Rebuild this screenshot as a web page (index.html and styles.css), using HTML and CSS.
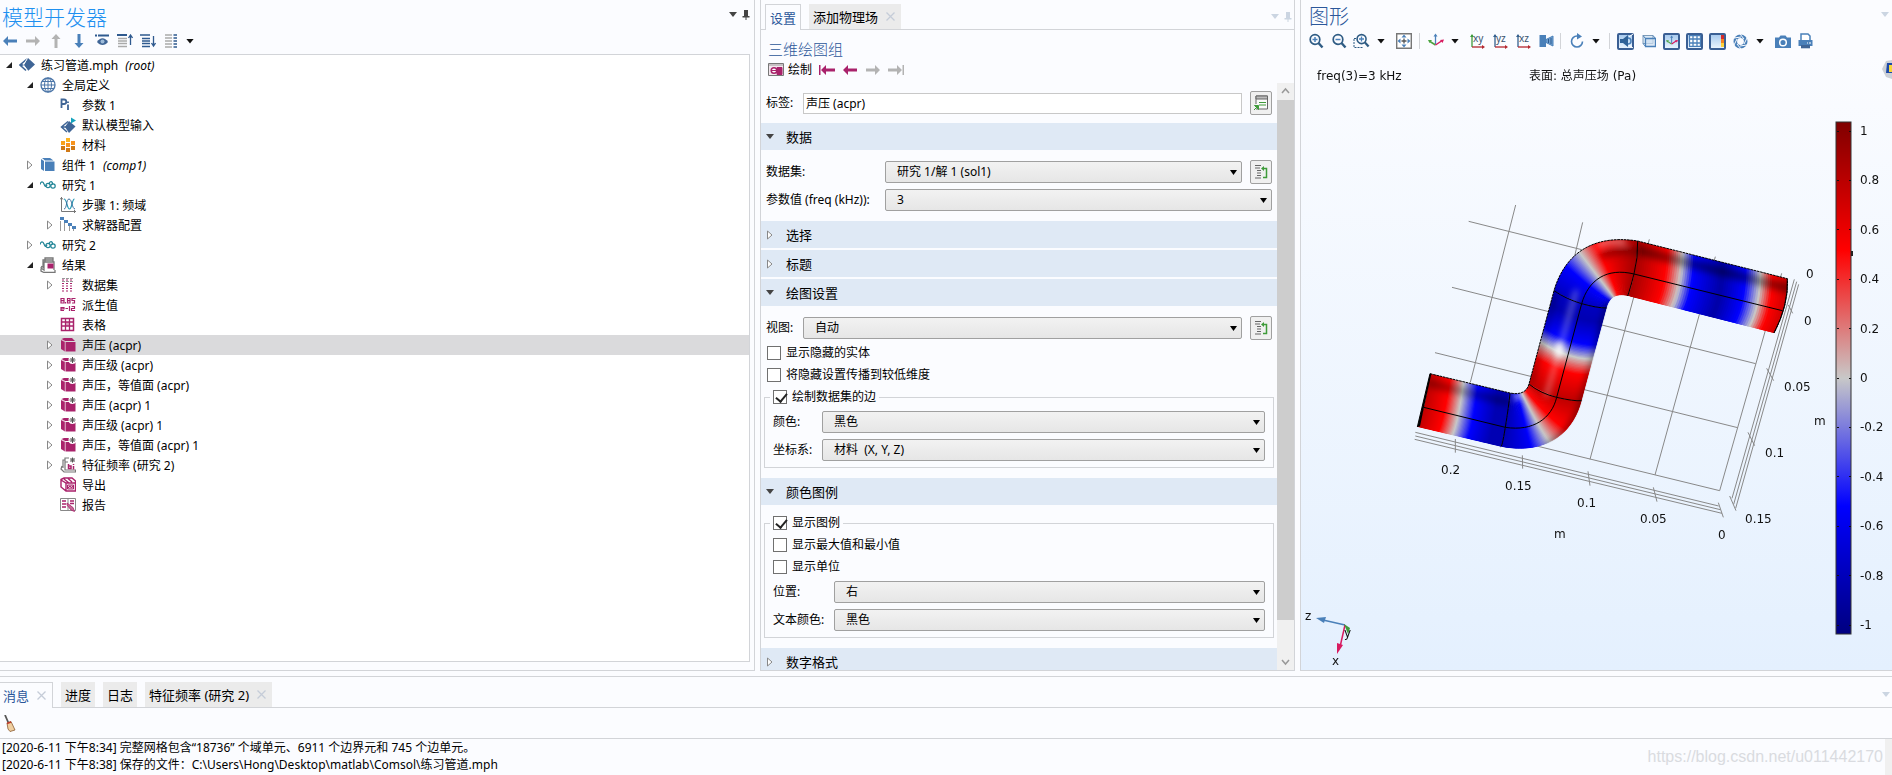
FILE: index.html
```html
<!DOCTYPE html>
<html lang="zh-CN">
<head>
<meta charset="utf-8">
<title>练习管道.mph</title>
<link rel="stylesheet" href="styles.css">
</head>
<body>
<svg class="defs" width="0" height="0" aria-hidden="true">
  <symbol id="open" viewBox="0 0 8 8"><path d="M7 1v6H1z" fill="#222"/></symbol>
  <symbol id="closed" viewBox="0 0 8 10"><path d="M1.500 1v8L6 5z" fill="#fff" stroke="#888"/></symbol>
  <symbol id="left" viewBox="0 0 14 10"><path d="M0 5l5-5v3.500h9v3H5V10z" fill="currentColor"/></symbol>
  <symbol id="right" viewBox="0 0 14 10"><path d="M14 5L9 0v3.500H0v3h9V10z" fill="currentColor"/></symbol>
  <symbol id="pin" viewBox="0 0 8 12"><path d="M2 1h4v6h1.500v1.500h-3V11h-1V8.500H.500V7H2z" fill="currentColor"/></symbol>
  <symbol id="cross" viewBox="0 0 9 9"><path d="M.500.500l8 8M8.500.500l-8 8" stroke="#c5ccd8" stroke-width="1.300"/></symbol>
  <symbol id="root" viewBox="0 0 16 16"><path d="M9 1l7 6.500L9 14 4.500 8z" fill="#3f6596"/><path d="M8 2L1 8l6 5.500M2 8h5" fill="none" stroke="#3f6596" stroke-width="1.600"/><path d="M8 2L4.500 8 9 14" fill="none" stroke="#fff"/></symbol>
  <symbol id="globe" viewBox="0 0 16 16"><g fill="none" stroke="#4c76a8"><circle cx="8" cy="8" r="7" stroke-width="1.300"/><ellipse cx="8" cy="8" rx="3.500" ry="7"/><path d="M8 1v14M1 8h14M2 4.500h12M2 11.500h12"/></g></symbol>
  <symbol id="pi" viewBox="0 0 16 16"><path d="M1.500 11V2.500h2.500a2 2 0 0 1 0 4.500H2M8 7.500V13M8 4.500V6" fill="none" stroke="#3f6596" stroke-width="1.800"/></symbol>
  <symbol id="input" viewBox="0 0 16 16"><path d="M9 4l6.500 5.500L9 16 5 10z" fill="#3f6596"/><path d="M8 4.500L1.500 10 7 15M2 10h5" fill="none" stroke="#3f6596" stroke-width="1.500"/><path d="M11 .500l5 3-5 3z" fill="#14a3bd"/></symbol>
  <symbol id="material" viewBox="0 0 16 16"><path d="M6 1h4v4H6z" fill="#fbb321"/><path d="M1 4h4v4H1z" fill="#f8a11c"/><path d="M6 6h4v4H6zM11 4h4v4h-4z" fill="#f7931e"/><path d="M1 9h4v4H1zM6 11h4v4H6zM11 9h4v4h-4z" fill="#d07a17"/></symbol>
  <symbol id="component" viewBox="0 0 16 16"><path d="M1 2l3 2v10l-3-2zM5 4.500h9.500V14H5zM2 1h8l3.500 2.500H5z" fill="#4a80b9"/></symbol>
  <symbol id="study" viewBox="0 0 16 16"><g fill="none" stroke="#1f8496" stroke-width="1.200"><path d="M0 7.500C1 4 3 4 4 7s2 3 3 1"/><circle cx="8" cy="8.500" r="2.200"/><circle cx="13" cy="9" r="2.200"/><path d="M9.500 7a1.600 1.600 0 1 1 2.500.500"/></g></symbol>
  <symbol id="freq" viewBox="0 0 16 16"><path d="M1.500 0v14.500H16M0 2.500L1.500.500 3 2.500M14 13l1.500 1.500L14 16" fill="none" stroke="#777"/><path d="M4 2c3 0 3 10 5.500 10S12 2 14.500 2" fill="none" stroke="#2697b3" stroke-width="1.200"/><path d="M4 12C7 12 6 2 9 2s3 10 6 10" fill="none" stroke="#3e6e9e"/></symbol>
  <symbol id="solver" viewBox="0 0 16 16"><path d="M.500 4v10M4.500 6v8M9.500 9v5M13.500 11v3" stroke="#999"/><path d="M0 0h4v3H0zM4 3h4v3H4zM8 6h4v3H8zM12 9h4v3h-4z" fill="#4a80b9"/></symbol>
  <symbol id="results" viewBox="0 0 16 16"><path d="M5 5V1h8v2M3 11V3h10v2M2 9L1 11l3 2V5h10v8M1 12v2l3 1.500h11V13" fill="none" stroke="#777" stroke-width="1.300"/><path d="M7.500 6.500h6v5h-6z" fill="#a9226b"/></symbol>
  <symbol id="dataset" viewBox="0 0 16 16"><path d="M2 1.500h12M2 4.500h12" stroke="#999" stroke-dasharray="3 1"/><path d="M2 3h12M2 6.500h12M2 9h12M2 11.500h12M2 14h12" stroke="#a9226b" stroke-dasharray="2 2"/></symbol>
  <symbol id="derived" viewBox="0 0 16 16"><path d="M1 1.500h3v2.200H1zM1 3.700h3V6H1zM5.500 5v1.500M7.500 1.500H10v2.200H7.500zM7.500 3.700H10V6H7.500zM15.500 1.500H12v2h2.500V6H12M1 10.500h3v1.300H1zM1 10v3.500h3M5.500 11.500H8M9.500 9v5M11.500 9.500h3v2h-3v2h3.500" fill="none" stroke="#a9226b" stroke-width="1.200"/></symbol>
  <symbol id="table" viewBox="0 0 16 16"><path d="M1.500 1.500h12v12h-12z" fill="#fff" stroke="#a9226b" stroke-width="1.500"/><path d="M5 5h4v4H5z" fill="#dca6c2"/><path d="M1 5h13M1 9h13M5.500 2v11M9.500 2v11" stroke="#a9226b" stroke-width="1.300"/></symbol>
  <symbol id="cube" viewBox="0 0 16 16"><path d="M1 3l4 2v9.500l-4-2.500zM5.500 5H15.500v9.500H5.500zM1.500 2L4 1h8l3 3H5z" fill="#a9226b"/><path d="M1.500 2.600L5 4.500V14" fill="none" stroke="#d893b5" stroke-width=".700"/></symbol>
  <symbol id="cubenew" viewBox="0 0 16 16"><use href="#cube"/><circle cx="12.500" cy="3" r="4" fill="#fff"/><path d="M12.500 0v6M9.500 3h6M10.500 1l4 4M14.500 1l-4 4" stroke="#555"/></symbol>
  <symbol id="eigen" viewBox="0 0 16 16"><path d="M5 9V1h4M3 11V3h2M2 9l-1 3 3 3h11.500v-2H5V5h3" fill="none" stroke="#777" stroke-width="1.200"/><path d="M8.500 7v4.500h2.500V9H9M13.500 9v3.500M13.500 7v1" fill="none" stroke="#a9226b" stroke-width="1.500"/><path d="M12.500.500v5M10 3h5M10.500 1l4 4M14.500 1l-4 4" stroke="#555"/></symbol>
  <symbol id="export" viewBox="0 0 16 16"><path d="M1 2.500L4 1h8l3.500 3v10H6L1 10zM1 3l5 3h9.500M6 6v8M4 2l5 4M8 1.500L12 5" fill="none" stroke="#a9226b" stroke-width="1.400"/><path d="M7.500 8h6v4h-6z" fill="#e6bcd1" stroke="#a9226b"/><path d="M8 11l2-2 1.500 2L13 9" fill="none" stroke="#a9226b"/></symbol>
  <symbol id="report" viewBox="0 0 16 16"><path d="M.500 1.500h15v12H.500zM8 2v11" fill="#fff" stroke="#888"/><path d="M2 4h4M2 7h4M2 10h4M10 4h4M10 6.500h4" stroke="#a9226b" stroke-width="1.300"/><path d="M7 6l6 4.500 1.500 4-3.500-1.500L7 8z" fill="#c76a97" stroke="#a9226b" stroke-width=".800"/></symbol>
  <symbol id="zoom" viewBox="0 0 16 16"><circle cx="7" cy="6.500" r="4.800" fill="none" stroke="#2f5c84" stroke-width="1.700"/><path d="M10.500 10l4 4.500" stroke="#2f5c84" stroke-width="2.400"/></symbol>
  <symbol id="triad" viewBox="0 0 18 16"><path d="M8.500 11V2" stroke="#4a80b9" stroke-width="1.300"/><path d="M8.500 12L3 8.500" stroke="#4ba43f" stroke-width="1.500"/><path d="M8.500 12l6-4" stroke="#d81b60" stroke-width="1.500"/><path d="M6.500 3.500L8.500.500l2 3z" fill="#4a80b9"/><path d="M1 7l4 0-2.500 3z" fill="#4ba43f"/><path d="M17 6.500l-4 .500 2.500 3z" fill="#d81b60"/></symbol>
  <symbol id="axes" viewBox="0 0 16 16"><path d="M2 14V2" stroke="currentColor" stroke-width="1.300"/><path d="M0 4l2-3 2 3z" fill="currentColor"/><path d="M2 14h11" stroke="#b3262e" stroke-width="1.300"/><path d="M12 12l3 2-3 2z" fill="#b3262e"/></symbol>
  <symbol id="sync" viewBox="0 0 16 16"><path d="M2 1.500h6M2 4h5M4 6.500h4M4 9h4M4 11.500h4M2 14h6" stroke="#666"/><path d="M10 4.500h3.500v9H10" fill="none" stroke="#3f9b3a" stroke-width="1.500"/><path d="M11 2v5L8 4.500z" fill="#3f9b3a"/></symbol>
</svg>

<main class="workspace">
  <section class="panel builder">
    <header class="head">
      <h1 class="title bright">模型开发器</h1>
      <span class="corner dark"><i class="caret"></i><svg width="8" height="12"><use href="#pin"/></svg></span>
    </header>
    <div class="toolbar tb-left">
      <button class="tool blue" aria-label="后退"><svg width="14" height="10"><use href="#left"/></svg></button>
      <button class="tool grey" aria-label="前进"><svg width="14" height="10"><use href="#right"/></svg></button>
      <button class="tool grey" aria-label="上移"><svg width="10" height="14" viewBox="0 0 10 14"><path d="M5 0l4.500 5h-3v9h-3V5h-3z" fill="currentColor"/></svg></button>
      <button class="tool blue" aria-label="下移"><svg width="10" height="14" viewBox="0 0 10 14"><path d="M5 14L.500 9h3V0h3v9h3z" fill="currentColor"/></svg></button>
      <button class="tool" aria-label="显示"><svg width="14" height="14" viewBox="0 0 14 14"><path d="M0 1.500h2M3 1.500h11" stroke="#2f5a8f" stroke-width="2"/><path d="M2 8c3-5 8-5 11 0-3 4-8 4-11 0z" fill="#3f6596"/><circle cx="7.500" cy="7.500" r="2" fill="#9dbbd9"/></svg></button>
      <button class="tool" aria-label="折叠"><svg width="16" height="14" viewBox="0 0 16 14"><path d="M0 1h10" stroke="#2f5a8f" stroke-width="2"/><path d="M1 4.500h9M1 7h9M1 9.500h9M1 12.500h9" stroke="#aaa" stroke-width="1.500"/><path d="M13.500 11V1M11.500 4l2-3 2 3" fill="none" stroke="#2f5a8f" stroke-width="1.300"/></svg></button>
      <button class="tool" aria-label="展开"><svg width="16" height="14" viewBox="0 0 16 14"><path d="M0 1h10M2 4.500h8M2 7h8M2 9.500h8M2 12.500h8" stroke="#2f5a8f" stroke-width="1.500"/><path d="M13.500 2v10M11.500 9l2 3 2-3" fill="none" stroke="#2f5a8f" stroke-width="1.300"/></svg></button>
      <button class="tool" aria-label="节点文本"><svg width="12" height="14" viewBox="0 0 12 14"><path d="M0 1h7M0 4h7M0 7h7M0 10h7M0 13h7" stroke="#aaa" stroke-width="1.700"/><path d="M8.500 1H12M8.500 4H12M8.500 7H12M8.500 10H12M8.500 13H12" stroke="#2f5a8f" stroke-width="1.700"/></svg></button>
      <button class="drop" aria-label="更多"><i class="caret"></i></button>
    </div>
    <div class="tree" role="tree">
      <div class="row l0" role="treeitem"><svg class="tw"><use href="#open"/></svg><svg class="ic"><use href="#root"/></svg><span>练习管道.mph <em>(root)</em></span></div>
      <div class="row l1" role="treeitem"><svg class="tw"><use href="#open"/></svg><svg class="ic"><use href="#globe"/></svg><span>全局定义</span></div>
      <div class="row l2" role="treeitem"><i class="tw"></i><svg class="ic"><use href="#pi"/></svg><span>参数 1</span></div>
      <div class="row l2" role="treeitem"><i class="tw"></i><svg class="ic"><use href="#input"/></svg><span>默认模型输入</span></div>
      <div class="row l2" role="treeitem"><i class="tw"></i><svg class="ic"><use href="#material"/></svg><span>材料</span></div>
      <div class="row l1" role="treeitem"><svg class="tw"><use href="#closed"/></svg><svg class="ic"><use href="#component"/></svg><span>组件 1 <em>(comp1)</em></span></div>
      <div class="row l1" role="treeitem"><svg class="tw"><use href="#open"/></svg><svg class="ic"><use href="#study"/></svg><span>研究 1</span></div>
      <div class="row l2" role="treeitem"><i class="tw"></i><svg class="ic"><use href="#freq"/></svg><span>步骤 1: 频域</span></div>
      <div class="row l2" role="treeitem"><svg class="tw"><use href="#closed"/></svg><svg class="ic"><use href="#solver"/></svg><span>求解器配置</span></div>
      <div class="row l1" role="treeitem"><svg class="tw"><use href="#closed"/></svg><svg class="ic"><use href="#study"/></svg><span>研究 2</span></div>
      <div class="row l1" role="treeitem"><svg class="tw"><use href="#open"/></svg><svg class="ic"><use href="#results"/></svg><span>结果</span></div>
      <div class="row l2" role="treeitem"><svg class="tw"><use href="#closed"/></svg><svg class="ic"><use href="#dataset"/></svg><span>数据集</span></div>
      <div class="row l2" role="treeitem"><i class="tw"></i><svg class="ic"><use href="#derived"/></svg><span>派生值</span></div>
      <div class="row l2" role="treeitem"><i class="tw"></i><svg class="ic"><use href="#table"/></svg><span>表格</span></div>
      <div class="row l2 selected" role="treeitem" aria-selected="true"><svg class="tw"><use href="#closed"/></svg><svg class="ic"><use href="#cube"/></svg><span>声压 (acpr)</span></div>
      <div class="row l2" role="treeitem"><svg class="tw"><use href="#closed"/></svg><svg class="ic"><use href="#cubenew"/></svg><span>声压级 (acpr)</span></div>
      <div class="row l2" role="treeitem"><svg class="tw"><use href="#closed"/></svg><svg class="ic"><use href="#cubenew"/></svg><span>声压，等值面 (acpr)</span></div>
      <div class="row l2" role="treeitem"><svg class="tw"><use href="#closed"/></svg><svg class="ic"><use href="#cubenew"/></svg><span>声压 (acpr) 1</span></div>
      <div class="row l2" role="treeitem"><svg class="tw"><use href="#closed"/></svg><svg class="ic"><use href="#cubenew"/></svg><span>声压级 (acpr) 1</span></div>
      <div class="row l2" role="treeitem"><svg class="tw"><use href="#closed"/></svg><svg class="ic"><use href="#cubenew"/></svg><span>声压，等值面 (acpr) 1</span></div>
      <div class="row l2" role="treeitem"><svg class="tw"><use href="#closed"/></svg><svg class="ic"><use href="#eigen"/></svg><span>特征频率 (研究 2)</span></div>
      <div class="row l2" role="treeitem"><i class="tw"></i><svg class="ic"><use href="#export"/></svg><span>导出</span></div>
      <div class="row l2" role="treeitem"><i class="tw"></i><svg class="ic"><use href="#report"/></svg><span>报告</span></div>
    </div>
  </section>

  <section class="panel settings">
    <nav class="tabs">
      <button class="tab active">设置</button>
      <button class="tab">添加物理场<svg class="x"><use href="#cross"/></svg></button>
      <span class="corner pale"><i class="caret"></i><svg width="8" height="12"><use href="#pin"/></svg></span>
    </nav>
    <h2 class="subtitle">三维绘图组</h2>
    <div class="toolbar tb-set">
      <button class="plot"><svg width="16" height="13" viewBox="0 0 16 13"><path d="M.500.500h15v12H.500z" fill="#f3e7ee" stroke="#777"/><path d="M1 2h14" stroke="#999"/><circle cx="6" cy="7.500" r="2.800" fill="#fff" stroke="#a9226b" stroke-width="1.500"/><path d="M4 7.500h4M9 4.500h5v7H9z" fill="#a9226b" stroke="#a9226b"/></svg>绘制</button>
      <button class="tool wine" aria-label="第一个"><svg width="16" height="10" viewBox="0 0 16 10"><path d="M0 0h1.500v10H0zM2 5l5-5v3.500h9v3H7V10z" fill="currentColor"/></svg></button>
      <button class="tool wine" aria-label="上一个"><svg width="14" height="10"><use href="#left"/></svg></button>
      <button class="tool grey" aria-label="下一个"><svg width="14" height="10"><use href="#right"/></svg></button>
      <button class="tool grey" aria-label="最后一个"><svg width="16" height="10" viewBox="0 0 16 10"><path d="M16 0h-1.500v10H16zM14 5L9 0v3.500H0v3h9V10z" fill="currentColor"/></svg></button>
    </div>
    <div class="scroller">
      <form class="form">
        <div class="field first">
          <label for="name">标签:</label>
          <input class="text" id="name" type="text" value="声压 (acpr)">
          <button class="side" type="button" aria-label="转到"><svg width="16" height="16" viewBox="0 0 16 16"><path d="M3 14h11.500V1H3v8" fill="#fafafa" stroke="#666"/><path d="M3 1h11.500v3H3z" fill="#bbb" stroke="#666"/><path d="M6 7.500h7M6 10h7" stroke="#3f9b3a"/><path d="M1.500 10.500h4v4zM1 15l3-3" fill="#3f9b3a" stroke="#3f9b3a"/></svg></button>
        </div>
        <button class="section" type="button"><i class="caret"></i>数据</button>
        <div class="group wide">
          <div class="field"><label for="ds">数据集:</label><span class="select"><select id="ds"><option>研究 1/解 1 (sol1)</option></select></span><button class="side" type="button" aria-label="转到源"><svg width="16" height="16"><use href="#sync"/></svg></button></div>
          <div class="field"><label for="pv">参数值 (freq (kHz)):</label><span class="select"><select id="pv"><option>3</option></select></span></div>
        </div>
        <button class="section" type="button"><svg class="tw"><use href="#closed"/></svg>选择</button>
        <button class="section" type="button"><svg class="tw"><use href="#closed"/></svg>标题</button>
        <button class="section" type="button"><i class="caret"></i>绘图设置</button>
        <div class="group">
          <div class="field"><label for="vw">视图:</label><span class="select"><select id="vw"><option>自动</option></select></span><button class="side" type="button" aria-label="转到源"><svg width="16" height="16"><use href="#sync"/></svg></button></div>
          <label class="check inset"><input type="checkbox">显示隐藏的实体</label>
          <label class="check inset"><input type="checkbox">将隐藏设置传播到较低维度</label>
          <fieldset class="box edges">
            <legend><label class="check"><input type="checkbox" checked>绘制数据集的边</label></legend>
            <div class="field"><label for="col">颜色:</label><span class="select"><select id="col"><option>黑色</option></select></span></div>
            <div class="field"><label for="crd">坐标系:</label><span class="select"><select id="crd"><option>材料&nbsp; (X, Y, Z)</option></select></span></div>
          </fieldset>
        </div>
        <button class="section" type="button"><i class="caret"></i>颜色图例</button>
        <div class="group tight">
          <fieldset class="box legend">
            <legend><label class="check"><input type="checkbox" checked>显示图例</label></legend>
            <label class="check"><input type="checkbox">显示最大值和最小值</label>
            <label class="check"><input type="checkbox">显示单位</label>
            <div class="field"><label for="pos">位置:</label><span class="select"><select id="pos"><option>右</option></select></span></div>
            <div class="field"><label for="tc">文本颜色:</label><span class="select"><select id="tc"><option>黑色</option></select></span></div>
          </fieldset>
        </div>
        <button class="section" type="button"><svg class="tw"><use href="#closed"/></svg>数字格式</button>
      </form>
      <div class="scrollbar" aria-hidden="true">
        <svg width="17" height="17" viewBox="0 0 17 17"><path d="M5 10l3.500-4 3.500 4" fill="none" stroke="#999" stroke-width="1.500"/></svg>
        <i class="thumb"></i><i class="rest"></i>
        <svg width="17" height="17" viewBox="0 0 17 17"><path d="M5 7l3.500 4L12 7" fill="none" stroke="#999" stroke-width="1.500"/></svg>
      </div>
    </div>
  </section>

  <section class="panel graphics">
    <header class="head">
      <h1 class="title">图形</h1>
      <span class="corner pale"><i class="caret"></i></span>
    </header>
    <div class="toolbar tb-gfx">
      <button class="tool" aria-label="放大"><svg width="16" height="16"><use href="#zoom"/><path d="M4.500 6.500h5M7 4v5" stroke="#4a80b9" stroke-width="1.500"/></svg></button>
      <button class="tool" aria-label="缩小"><svg width="16" height="16"><use href="#zoom"/><path d="M4.500 6.500h5" stroke="#4a80b9" stroke-width="1.500"/></svg></button>
      <button class="tool" aria-label="缩放框"><svg width="17" height="16" viewBox="0 0 17 16"><path d="M1 6v8.500h9M1 5.500h3" fill="none" stroke="#2f5c84" stroke-dasharray="2 1"/><svg x="2" y="0" width="15" height="15"><use href="#zoom"/></svg><path d="M6 6h5M8.500 3.500v5" stroke="#4a80b9" stroke-width="1.300"/></svg></button>
      <button class="drop" aria-label="缩放选项"><i class="caret"></i></button>
      <button class="tool" aria-label="缩放到窗口大小"><svg width="16" height="16" viewBox="0 0 16 16"><path d="M.700.700h14.600v14.600H.700z" fill="#fff" stroke="#777" stroke-width="1.400"/><path d="M8 1.500l2.500 3h-5zM8 14.500l2.500-3h-5zM1.500 8l3-2.500v5zM14.500 8l-3-2.500v5z" fill="#4a80b9"/><path d="M5.500 8h5M8 5.500v5" stroke="#555" stroke-width="1.300"/></svg></button>
      <i class="sep"></i>
      <button class="tool" aria-label="默认视图"><svg width="18" height="16"><use href="#triad"/></svg></button>
      <button class="drop" aria-label="视图选项"><i class="caret"></i></button>
      <button class="tool axis green" aria-label="XY 视图"><svg width="16" height="16"><use href="#axes"/></svg><span>xy</span></button>
      <button class="tool axis slate" aria-label="YZ 视图"><svg class="yz" width="16" height="16"><use href="#axes"/></svg><span>yz</span></button>
      <button class="tool axis slate" aria-label="XZ 视图"><svg width="16" height="16"><use href="#axes"/></svg><span>xz</span></button>
      <button class="tool" aria-label="正交投影"><svg width="15" height="14" viewBox="0 0 15 14"><path d="M.500 1H7v12H.500z" fill="#4a80b9"/><path d="M7 5.500l7-3.500v10L7 8.500z" fill="#6fa0d0" stroke="#4a80b9"/><path d="M9.500 5v4M12 4v6" stroke="#2f5a8f"/></svg></button>
      <i class="sep close"></i>
      <button class="tool" aria-label="旋转"><svg width="14" height="16" viewBox="0 0 14 16"><path d="M12.500 8.500A5.500 5.500 0 1 1 7 3h1" fill="none" stroke="#4a80b9" stroke-width="1.600"/><path d="M7 0l5 3.500L7 6.500z" fill="#4a80b9"/></svg></button>
      <button class="drop" aria-label="旋转选项"><i class="caret"></i></button>
      <i class="sep close"></i>
      <button class="tool on" aria-label="场景光"><svg width="14" height="14" viewBox="0 0 14 14"><path d="M1 5h3l5-4v12L4 9H1z" fill="#2f6298"/><path d="M9 4a3 3 0 0 1 0 6" fill="none" stroke="#4a80b9" stroke-width="1.500"/><path d="M10 3l4-3M10 11l4 3" stroke="#fff"/></svg></button>
      <button class="tool" aria-label="透明"><svg width="14" height="14" viewBox="0 0 14 14"><path d="M1 1.500h10v8H1z" fill="#dceaf7" stroke="#7d9bb8"/><path d="M3.500 4.500h10v8h-10z" fill="#cfe0f1" fill-opacity=".7" stroke="#4a80b9" stroke-width="1.300"/><path d="M1 1.500l2.500 3M11 1.500l2.500 3M1 9.500l2.500 3" stroke="#4a80b9"/></svg></button>
      <button class="tool on" aria-label="坐标轴"><svg width="14" height="12" viewBox="0 0 18 16"><use href="#triad"/></svg></button>
      <button class="tool on" aria-label="栅格"><svg width="12" height="12" viewBox="0 0 12 12"><path d="M.500.500h11v11H.500zM4 1v10M8 1v10M1 4h10M1 8h10" fill="#fff" stroke="#4a80b9" stroke-width="1.300"/></svg></button>
      <button class="tool on" aria-label="颜色图例"><svg width="14" height="12" viewBox="0 0 14 12"><path d="M10 0h3v4h-3z" fill="#d42a2a"/><path d="M10 4h3v4h-3z" fill="#f58220"/><path d="M10 8h3v4h-3z" fill="#ffd33a"/></svg></button>
      <button class="tool" aria-label="图像快照"><svg width="15" height="15" viewBox="0 0 15 15"><circle cx="7.500" cy="7.500" r="5.200" fill="none" stroke="#4a80b9" stroke-width="3.600"/><path d="M7 0l4 5M14 4l-3 6M14 11l-7 1M8 15l-4-5M1 11l3-6M1 4l7-1" stroke="#fbfcff" stroke-width="1"/></svg></button>
      <button class="drop" aria-label="快照选项"><i class="caret"></i></button>
      <button class="tool" aria-label="照相"><svg width="16" height="13" viewBox="0 0 16 13"><path d="M0 2.500h4L5.500.500h5L12 2.500h4V13H0z" fill="#4a80b9"/><circle cx="8" cy="7.500" r="3.300" fill="#4a80b9" stroke="#fff" stroke-width="1.500"/></svg></button>
      <button class="tool" aria-label="打印"><svg width="15" height="16" viewBox="0 0 15 16"><path d="M3 7V1h7l2 2v4" fill="#fff" stroke="#4a80b9" stroke-width="1.500"/><path d="M.500 7h14v6H.500z" fill="#4a80b9"/><path d="M3 12h9v3.300H3z" fill="#3f6596"/><path d="M9 10h1M11 10h2" stroke="#fff"/></svg></button>
    </div>
    <svg class="canvas" viewBox="1301 53 591 617" role="img" aria-label="总声压场">
      <defs>
        <linearGradient id="wave" x1="0" y1="0" x2="0" y2="1"><stop offset="0" stop-color="#800000"/><stop offset=".25" stop-color="#f00"/><stop offset=".5" stop-color="#c8c8c8"/><stop offset=".75" stop-color="#00f"/><stop offset="1" stop-color="#000080"/></linearGradient>
        <clipPath id="outline"><path d="M150 581L390 639C420 645 440 637 447 612L522 332C550 235 625 160 773 183L1222 296Q1226 375 1182 459L743 348C710 340 688 352 680 384L605 662C578 770 485 826 362 800L112 741z"/></clipPath>
        <filter id="soft" x="-50%" y="-50%" width="200%" height="200%"><feGaussianBlur stdDeviation="9"/></filter>
      </defs>
      <g transform="translate(1380 180) scale(.33333)">
        <path class="grid" d="M407 75L271 607M608 127L583 232M808 178L630 838M1006 230L825 885M1205 280L1019 932M266 124L605 209M216 322L1127 551M165 518L1073 743M470 798L1019 932"/>
        <path class="grid" d="M106 757L1016 978M106 768L1021 989M104 778L1026 1000M226 777V818M427 826L428 866M624 874L630 917M820 922L831 965M1015 968L1030 1012M1243 298L1056 955M1250 305L1061 973M1256 313L1067 985M1225 375L1238 400M1160 565L1181 602M1104 757L1124 797M1049 948L1068 992"/>
        <g clip-path="url(#outline)">
          <g id="slices"></g>
          <g filter="url(#soft)" fill="none" stroke-linecap="round">
            <path d="M780 212L1225 325" stroke="#000" stroke-width="28" opacity=".4"/>
            <path d="M150 610L380 665" stroke="#000" stroke-width="24" opacity=".3"/>
            <path d="M690 375L612 662Q590 750 510 800" stroke="#000" stroke-width="30" opacity=".35"/>
            <path d="M525 345L455 600" stroke="#000" stroke-width="18" opacity=".25"/>
            <path d="M588 335L500 645" stroke="#fff" stroke-width="12" opacity=".4"/>
            <path d="M538 500V518" stroke="#fff" stroke-width="26"/>
            <path d="M655 195Q690 180 735 186" stroke="#fff" stroke-width="10" opacity=".7"/>
            <path d="M413 647V650" stroke="#fff" stroke-width="16"/>
            <path d="M670 225Q720 208 765 215" stroke="#500" stroke-width="20" opacity=".5"/>
          </g>
        </g>
        <path class="edge" d="M150 581L390 639C420 645 440 637 447 612L522 332C550 235 625 160 773 183L1222 296Q1226 375 1182 459" stroke-dasharray="8 2"/>
        <path class="edge" d="M131 682L376 742C460 755 515 715 530 652L605 371C625 300 680 262 762 282L1207 392M390 640Q386 680 376 742T362 800M447 612Q480 640 530 652T605 662M522 332Q560 358 605 371T680 384M773 183Q774 235 762 282T743 348M1222 296Q1226 375 1182 459M150 581L112 741"/>
        <path d="M150 581L112 741l8-2 12-57 22-100z"/>
      </g>
      <g class="scale">
        <rect x="1836" y="122" width="15" height="512" fill="url(#wave)" stroke="#333"/>
        <path d="M1837 131.500h2m10 0h2M1837 180.500h2m10 0h2M1837 229.500h2m10 0h2M1837 279.500h2m10 0h2M1837 328.500h2m10 0h2M1837 378.500h2m10 0h2M1837 427.500h2m10 0h2M1837 476.500h2m10 0h2M1837 526.500h2m10 0h2M1837 575.500h2m10 0h2M1837 625.500h2m10 0h2" stroke="#111"/>
        <path d="M1852 251v5" stroke="#222" stroke-width="2"/>
      </g>
      <g class="label">
        <text x="1317" y="80">freq(3)=3 kHz</text>
        <text x="1529" y="80">表面: 总声压场 (Pa)</text>
        <text x="1860" y="135">1</text><text x="1860" y="184">0.8</text><text x="1860" y="234">0.6</text><text x="1860" y="283">0.4</text><text x="1860" y="333">0.2</text><text x="1860" y="382">0</text><text x="1860" y="431">-0.2</text><text x="1860" y="481">-0.4</text><text x="1860" y="530">-0.6</text><text x="1860" y="580">-0.8</text><text x="1860" y="629">-1</text>
        <text x="1441" y="474">0.2</text><text x="1505" y="490">0.15</text><text x="1577" y="507">0.1</text><text x="1640" y="523">0.05</text><text x="1718" y="539">0</text><text x="1554" y="538">m</text>
        <text x="1745" y="523">0.15</text><text x="1765" y="457">0.1</text><text x="1784" y="391">0.05</text><text x="1814" y="425">m</text><text x="1804" y="325">0</text><text x="1806" y="278">0</text>
      </g>
      <g class="compass">
        <path d="M1345 625L1323 620" stroke="#4a80b9" stroke-width="1.500"/><path d="M1316 618l10-1-2 6z" fill="#4a80b9"/>
        <path d="M1345 625l-5 22" stroke="#d81b60" stroke-width="1.500"/><path d="M1337 654l0-11 6 2z" fill="#d81b60"/>
        <path d="M1344 624l6 4-2 6z" fill="#3f9b3a"/>
        <g class="label"><text x="1305" y="620">z</text><text x="1344" y="637">y</text><text x="1332" y="665">x</text></g>
      </g>
      <g class="badge"><path d="M1892 60l-6 1-4 8 4 8 6 2z" fill="#ccd0d6"/><path d="M1892 63h-5l-1 10h6z" fill="#1c49a8"/><path d="M1892 65h-3v7h3z" fill="#f5d63c"/></g>
    </svg>
  </section>
</main>

<section class="dock">
  <nav class="tabs">
    <button class="tab active">消息<svg class="x"><use href="#cross"/></svg></button>
    <button class="tab">进度</button>
    <button class="tab">日志</button>
    <button class="tab">特征频率 (研究 2)<svg class="x"><use href="#cross"/></svg></button>
    <span class="corner pale"><i class="caret"></i></span>
  </nav>
  <div class="sweep"><button class="tool" aria-label="清除"><svg width="12" height="17" viewBox="0 0 12 17"><path d="M1 0l3.500 8" stroke="#555" stroke-width="1.800"/><path d="M3 8l4-1.500L11 15l-5 1.500L4 14z" fill="#f0cfa0" stroke="#8a5a30" stroke-width=".800"/><path d="M3 8.500l4-1.500" stroke="#c0392b" stroke-width="1.500"/></svg></button></div>
  <div class="log">
    <div class="lines">
      <p>[2020-6-11 下午8:34] 完整网格包含“18736” 个域单元、6911 个边界元和 745 个边单元。</p>
      <p>[2020-6-11 下午8:38] 保存的文件：C:\Users\Hong\Desktop\matlab\Comsol\练习管道.mph</p>
    </div>
    <span class="mark">https://blog.csdn.net/u011442170</span>
    <i class="gutter"></i>
  </div>
</section>
<script src="pipe.js"></script>
</body>
</html>
```
FILE: styles.css
```css
* { box-sizing: border-box; }
body {
  margin: 0; height: 100vh; overflow: hidden;
  display: flex; flex-direction: column; gap: 5px;
  background: #fbfcff; color: #000;
  font: 12px/16px "Noto Sans", "Noto Sans CJK SC", sans-serif;
}
button, input, select { font: inherit; color: inherit; }
button { border: 0; padding: 0; background: none; }
h1, h2, p { margin: 0; font-weight: 400; }
i { font-style: normal; }
svg { display: block; flex: none; }
.defs { position: absolute; }

.workspace {
  flex: 1; min-height: 0; display: grid; gap: 5px;
  grid-template-columns: minmax(0, 755fr) minmax(0, 535fr) minmax(0, 592fr);
}
.panel { display: flex; flex-direction: column; min-width: 0; min-height: 0; border: solid #d2d4d8; border-width: 0 1px 1px; }
.builder { border-left: 0; }
.graphics { border-right: 0; background: linear-gradient(#fbfcff 8%, #e4f0fe); }

.head { display: flex; justify-content: space-between; height: 29px; padding: 0 2px; }
.title { font: 300 21px/32px "Noto Sans CJK SC", sans-serif; color: #2b579a; }
.title.bright { color: #1e90f0; }
.graphics .head { padding: 0 1px 0 8px; }
.graphics .title { font-size: 20px; }
.corner { display: flex; align-items: center; gap: 5px; padding-right: 2px; }
.dark { color: #444; }
.pale { color: #cbd5e2; margin-left: auto; }
.caret { width: 8px; height: 5px; background: currentColor; clip-path: polygon(0 0, 100% 0, 50% 100%); flex: none; }

.toolbar { display: flex; align-items: center; height: 24px; flex: none; }
.tb-left { margin-left: -2px; }
.tool { width: 23px; height: 20px; display: flex; align-items: center; justify-content: center; flex: none; }
.drop { width: 19px; height: 20px; padding-left: 4px; display: flex; align-items: center; color: #111; }
.blue { color: #4a80b9; }
.grey { color: #b3b3b3; }
.wine { color: #a9226b; }
.tb-gfx { padding-left: 3px; }
.sep { width: 1px; height: 16px; margin: 0 4px; background: #d2d4d8; }
.sep.close { margin-left: 2px; }
.on { width: 17px; height: 17px; margin: 0 3px; border: 2px solid #3a5f94; border-radius: 2px; background: linear-gradient(#a9cbee, #e8f3fd); }
.axis { position: relative; }
.axis span { position: absolute; left: 7px; top: 0; font-size: 10px; line-height: 14px; color: #3a5470; }
.green { color: #3f9b3a; }
.slate { color: #34608f; }
.yz { color: #34608f; }

.tree { flex: 1; min-height: 0; margin: 1px 4px 8px 0; border: solid #d2d4d8; border-width: 1px 1px 1px 0; background: #fff; }
.row { display: flex; align-items: center; height: 20px; white-space: pre; }
.row .tw { width: 8px; height: 10px; margin-right: 6px; }
.row .ic { width: 16px; height: 16px; margin-right: 6px; }
.row span { padding-top: 2px; }
.row em { margin-left: 4px; }
.l0 { padding-left: 5px; }
.l1 { padding-left: 26px; }
.l2 { padding-left: 46px; }
.selected { background: #dadadc; }

.tabs { display: flex; align-items: stretch; height: 30px; padding: 4px 0 0 4px; border-bottom: 1px solid #d2d4d8; flex: none; }
.tab { display: flex; align-items: center; padding: 0 4px; margin-right: 8px; background: #ebebeb; font-size: 13px; white-space: nowrap; }
.tab .x { width: 9px; height: 9px; margin: 0 2px 0 8px; }
.tab.active { margin-bottom: -1px; border: 1px solid #d2d4d8; border-bottom: 0; background: #fbfcff; color: #2b579a; }
.subtitle { padding: 7px 7px 0; font: 300 15px/24px "Noto Sans CJK SC", sans-serif; color: #2b579a; }
.tb-set { height: 17px; margin-bottom: 5px; padding-left: 7px; }
.plot { display: flex; align-items: center; gap: 4px; margin-right: 3px; }

.scroller { flex: 1; min-height: 0; display: flex; }
.form { flex: 1; min-width: 0; overflow: hidden; }
.scrollbar { width: 17px; display: flex; flex-direction: column; background: #f0f0f0; }
.thumb { flex: 520; background: #cdcdcd; }
.rest { flex: 33; }
.field { display: flex; align-items: center; height: 24px; margin-bottom: 4px; }
.field > label { white-space: nowrap; }
.first { margin: 8px 5px; }
.first label, .group label { flex: none; }
.first label, .group > .field > label { width: 37px; }
.wide > .field > label { width: 119px; }
.group { padding: 10px 5px 5px; }
.group.tight { padding-top: 7px; }
.text { flex: 1; min-width: 0; height: 21px; padding: 0 2px; border: 1px solid #c8c8c8; background: #fff; }
.select { position: relative; flex: 1; min-width: 0; }
.select::after { content: ""; position: absolute; right: 5px; top: 9px; width: 7px; height: 5px; background: #000; clip-path: polygon(0 0, 100% 0, 50% 100%); pointer-events: none; }
select { display: block; appearance: none; width: 100%; height: 22px; padding: 0 20px 0 11px; border: 1px solid #a0a0a0; border-radius: 2px; background: linear-gradient(#f2f2f2, #e6e6e6); }
.side { width: 22px; height: 24px; margin-left: 8px; display: flex; align-items: center; justify-content: center; border: 1px solid #a0a0a0; border-radius: 2px; background: #f0f0f0; }
.section { display: flex; align-items: center; width: 100%; height: 27px; margin-bottom: 2px; padding-left: 5px; background: #dfe9f5; font-size: 13px; }
.section .caret { color: #444; margin-right: 12px; }
.section .tw { width: 8px; height: 10px; margin-right: 12px; }
.section:has(.caret) { margin-bottom: 0; }
.check { display: flex; align-items: center; height: 22px; }
.check input { appearance: none; width: 14px; height: 14px; margin: 0 5px 0 0; border: 1px solid #707070; background: #fff; }
.check input:checked::before { content: ""; display: block; width: 5px; height: 9px; margin: 0 0 0 4px; border: solid #222; border-width: 0 2px 2px 0; transform: rotate(40deg); }
.inset { padding-left: 1px; }
.group > .field + .check { margin-top: -2px; }
.box { margin: 0 -2px 5px; padding: 0 8px 1px; border: 1px solid #d2d4d8; min-width: 0; }
.box legend { margin-left: -3px; padding: 0 3px; }
.edges > .field > label { width: 49px; }
.edges > legend + .field { margin-top: 2px; }
.legend > .field > label { width: 61px; }
.legend > .check + .field { margin-top: 2px; }

.canvas { flex: 1; width: 100%; min-height: 0; }
.grid { fill: none; stroke: #888; stroke-width: 3; }
.edge { fill: none; stroke: #000; stroke-width: 3; }
.label { font: 12px "DejaVu Sans", "Noto Sans CJK SC", sans-serif; fill: #111; }

.dock { border-top: 1px solid #d2d4d8; flex: none; }
.dock .tabs { height: 31px; padding: 5px 0 0; }
.dock .tab.active { padding: 0 4px 0 3px; border-left: 0; }
.sweep { height: 31px; display: flex; align-items: center; border-bottom: 1px solid #d2d4d8; margin-left: -2px; }
.log { display: flex; height: 36px; line-height: 17px; }
.lines { flex: 1; padding: 0 2px; white-space: nowrap; }
.mark { align-self: center; margin-right: 2px; font: 16px "Liberation Sans", sans-serif; color: #d9dbe0; }
.gutter { width: 7px; background: #f0f0f0; }
```
FILE: pipe.js
```js
// Surface pressure on the pipe, drawn as thin bands across its length.
const NS = 'http://www.w3.org/2000/svg';
const line = (a, b) => t => [a[0] + (b[0] - a[0]) * t, a[1] + (b[1] - a[1]) * t];
const cubic = (a, b, c, d) => t => [0, 1].map(i => {
  const u = 1 - t;
  return u * u * u * a[i] + 3 * u * u * t * b[i] + 3 * u * t * t * c[i] + t * t * t * d[i];
});
const segments = [
  { l: line([150, 581], [390, 639]), c: line([131, 682], [376, 742]), r: line([112, 741], [362, 800]),
    v: [[0, .75], [.25, .5], [.42, 0], [.6, -.5], [.85, -.8], [1, -.8]] },
  { l: cubic([390, 639], [420, 645], [440, 637], [447, 612]), c: cubic([376, 742], [460, 755], [515, 715], [530, 652]), r: cubic([362, 800], [485, 826], [578, 770], [605, 662]),
    v: [[0, -.8], [.25, -.55], [.46, 0], [.68, .5], [1, .75]] },
  { l: line([447, 612], [522, 332]), c: line([530, 652], [605, 371]), r: line([605, 662], [680, 384]),
    v: [[0, .75], [.28, .5], [.45, 0], [.6, -.5], [.85, -.8], [1, -.75]] },
  { l: cubic([522, 332], [550, 235], [625, 160], [773, 183]), c: cubic([605, 371], [625, 300], [680, 262], [762, 282]), r: cubic([680, 384], [688, 352], [710, 340], [743, 348]),
    v: [[0, -.75], [.28, -.5], [.48, 0], [.66, .5], [1, .85]] },
  { l: line([773, 183], [1222, 296]), c: line([762, 282], [1212, 392]), r: line([743, 348], [1186, 462]),
    v: [[0, .85], [.2, .5], [.3, 0], [.38, -.5], [.57, -.85], [.72, -.5], [.82, 0], [.9, .5], [1, .7]] },
];
const stops = [[-1, [0, 0, 128]], [-.5, [0, 0, 255]], [0, [200, 200, 200]], [.5, [255, 0, 0]], [1, [128, 0, 0]]];
function sample(table, x) {
  let i = 1;
  while (i < table.length - 1 && table[i][0] < x) i++;
  const [x0, a] = table[i - 1], [x1, b] = table[i];
  const k = Math.min(1, Math.max(0, (x - x0) / (x1 - x0)));
  return Array.isArray(a) ? a.map((n, j) => Math.round(n + (b[j] - n) * k)) : a + (b - a) * k;
}
const mid = (l, c, r) => [2 * c[0] - (l[0] + r[0]) / 2, 2 * c[1] - (l[1] + r[1]) / 2];
const host = document.getElementById('slices');
const N = 70;
for (const s of segments) {
  for (let k = 0; k < N; k++) {
    const t = k / N, e = Math.min(1, (k + 2) / N);
    const l = s.l(t), r = s.r(t), q = mid(l, s.c(t), r);
    const l2 = s.l(e), r2 = s.r(e), q2 = mid(l2, s.c(e), r2);
    const p = document.createElementNS(NS, 'path');
    p.setAttribute('d', `M${l}Q${q} ${r}L${r2}Q${q2} ${l2}z`);
    p.setAttribute('fill', `rgb(${sample(stops, sample(s.v, t + .5 / N))})`);
    host.appendChild(p);
  }
}
```
